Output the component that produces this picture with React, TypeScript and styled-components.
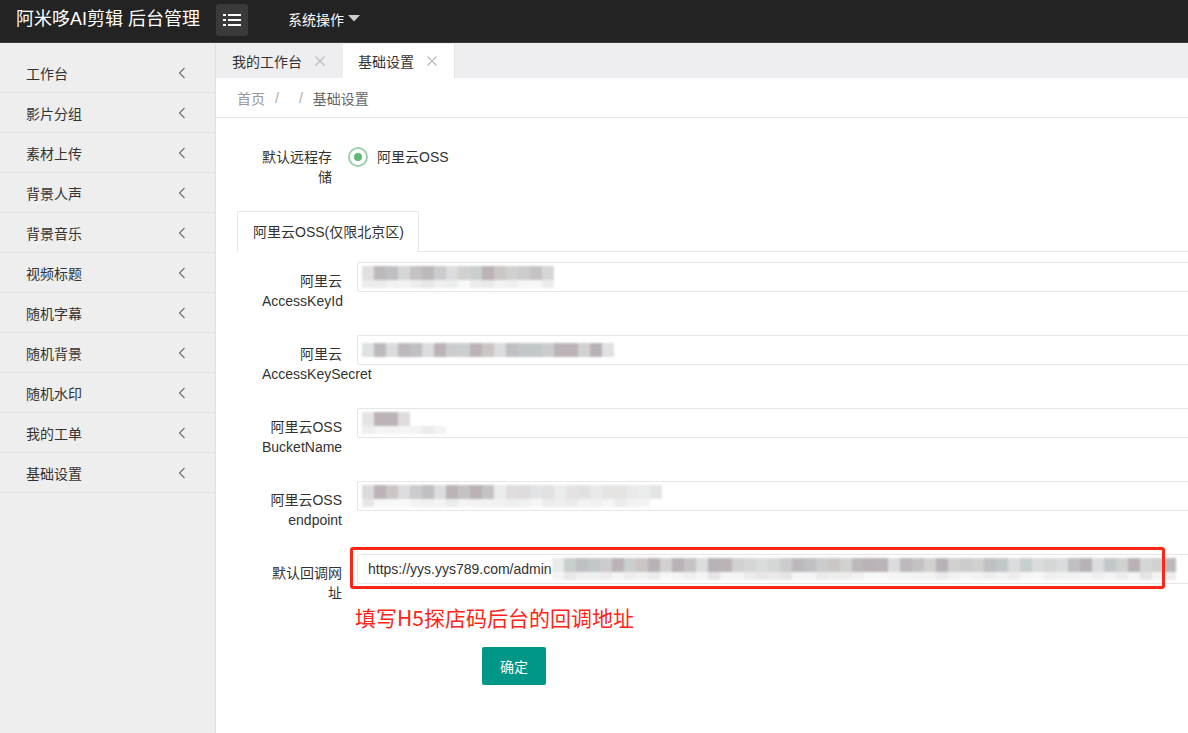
import styled, { createGlobalStyle } from 'styled-components';

const GlobalStyle = createGlobalStyle`
  html, body {
    margin: 0;
    padding: 0;
    overflow: hidden;
  }
  body {
    font-family: "Liberation Sans", "Noto Sans CJK SC", sans-serif;
    font-size: 14px;
    color: #333;
  }
`;

const Page = styled.div`
  display: flex;
  flex-direction: column;
  height: 100vh;
  width: 100vw;
`;

const Header = styled.div`
  height: 42px;
  flex-shrink: 0;
  background: #232323;
  border-bottom: 1px solid #3d3d3d;
  display: flex;
  align-items: center;
`;

const Logo = styled.div`
  width: 200px;
  padding-left: 16px;
  color: #fff;
  font-size: 18px;
  line-height: 24px;
  margin-top: -5px;
  white-space: nowrap;
`;

const MenuBtn = styled.div`
  width: 32px;
  height: 32px;
  margin-top: -2px;
  border-radius: 3px;
  background: #3a3a3a;
  display: flex;
  align-items: center;
  justify-content: center;
`;

const NavMenu = styled.div`
  margin-left: 40px;
  margin-top: -5px;
  color: #fff;
  display: flex;
  align-items: center;
  gap: 4px;
`;

const Body = styled.div`
  flex: 1;
  display: flex;
  min-height: 0;
`;

const Sidebar = styled.div`
  width: 215px;
  flex-shrink: 0;
  background: #eee;
  border-right: 1px solid #e0e0e0;
  padding-top: 10px;
`;

const NavItem = styled.div`
  height: 39px;
  border-bottom: 1px solid #e2e2e2;
  padding: 0 29px 0 26px;
  display: flex;
  align-items: center;
  justify-content: space-between;
  color: #333;
`;

const Main = styled.div`
  flex: 1;
  display: flex;
  flex-direction: column;
  overflow: hidden;
`;

const TabBar = styled.div`
  height: 35px;
  flex-shrink: 0;
  background: #eeeef0;
  display: flex;
  align-items: flex-end;
`;

const PageTab = styled.div<{ $active?: boolean }>`
  height: ${(p) => (p.$active ? '34px' : '35px')};
  display: flex;
  align-items: center;
  gap: 13px;
  padding: ${(p) => (p.$active ? '0 17px 0 15px' : '0 18px 0 16px')};
  background: ${(p) => (p.$active ? '#fff' : 'transparent')};
  border-right: ${(p) => (p.$active ? '1px solid #e2e2e2' : 'none')};
  color: #333;
`;

const Breadcrumb = styled.div`
  height: 39px;
  flex-shrink: 0;
  border-bottom: 1px solid #e6e6e6;
  padding-left: 21px;
  display: flex;
  align-items: center;
  color: #999;
`;

const Crumb = styled.span<{ $current?: boolean }>`
  color: ${(p) => (p.$current ? '#666' : '#999')};
`;

const Sep = styled.span`
  color: #aaa;
  margin: 0 10px;
`;

const Content = styled.div`
  padding: 20px 0 0 21px;
`;

const FormItem = styled.div`
  display: flex;
  margin-bottom: 15px;
`;

const Label = styled.div`
  width: 80px;
  flex-shrink: 0;
  padding: 9px 15px;
  line-height: 20px;
  text-align: right;
  white-space: nowrap;
  color: #333;
`;

const LabelLine = styled.div<{ $left?: boolean }>`
  text-align: ${(p) => (p.$left ? 'left' : 'right')};
`;

const RadioBlock = styled.div`
  align-self: flex-start;
  margin-top: 9px;
  height: 20px;
  line-height: 20px;
  display: flex;
  align-items: center;
  gap: 9px;
  margin-left: 1px;
`;

const RadioCircle = styled.span`
  width: 16px;
  height: 16px;
  border-radius: 50%;
  border: 2px solid #9dcfab;
  display: flex;
  align-items: center;
  justify-content: center;
  &::after {
    content: '';
    width: 8px;
    height: 8px;
    border-radius: 50%;
    background: #5fb878;
  }
`;

const TabBox = styled.div``;

const TabTitleRow = styled.div`
  display: flex;
  border-bottom: 1px solid #e6e6e6;
  height: 40px;
`;

const TabTitle = styled.div`
  line-height: 40px;
  padding: 0 14px 0 15px;
  border: 1px solid #e6e6e6;
  border-bottom: none;
  box-sizing: border-box;
  background: #fff;
  margin-bottom: -1px;
  height: 41px;
`;

const TabContent = styled.div`
  padding: 10px;
`;

const InputBlock = styled.div`
  position: relative;
  flex-shrink: 0;
`;

const Field = styled.div<{ $pad?: number }>`
  width: 900px;
  height: 30px;
  box-sizing: border-box;
  border: 1px solid #e6e6e6;
  border-radius: 2px;
  background: #fff;
  display: flex;
  align-items: center;
  padding-left: ${(p) => p.$pad ?? 4}px;
  color: #333;
  white-space: nowrap;
`;

const MosaicWrap = styled.div`
  display: flex;
  flex-direction: column;
  filter: blur(1px);
`;

const MosaicRow = styled.div`
  display: flex;
`;

const Cell = styled.span<{ $h: number }>`
  width: 12px;
  height: ${(p) => p.$h}px;
`;

const Annotation = styled.div`
  position: absolute;
  left: -7px;
  top: -7px;
  width: 809px;
  height: 36px;
  border: 3px solid #ff2418;
  border-radius: 3px;
  pointer-events: none;
`;

const Note = styled.div`
  position: absolute;
  left: -2px;
  top: 51px;
  font-family: "Noto Sans CJK SC", "Liberation Sans", sans-serif;
  font-size: 21px;
  line-height: 24px;
  color: #ff2418;
  white-space: nowrap;
`;

const ButtonRow = styled.div`
  padding: 10px 0 0 245px;
`;

const Button = styled.button`
  width: 64px;
  height: 38px;
  border: none;
  border-radius: 2px;
  background: #009688;
  color: #fff;
  font-family: inherit;
  font-size: 14px;
  padding: 0;
`;

const Chevron = () => (
  <svg width="8" height="12" viewBox="0 0 8 12">
    <polyline points="6.5,1 1.5,6 6.5,11" fill="none" stroke="#777" strokeWidth="1.2" />
  </svg>
);

const Close = () => (
  <svg width="10" height="10" viewBox="0 0 10 10">
    <path d="M0.5 0.5L9.5 9.5M9.5 0.5L0.5 9.5" stroke="#bbb" strokeWidth="1.2" />
  </svg>
);

const ListIcon = () => (
  <svg width="18" height="12" viewBox="0 0 18 12">
    {[1, 6, 11].map((y) => (
      <g key={y}>
        <rect x="0" y={y - 1} width="3" height="2" fill="#fff" />
        <rect x="5" y={y - 1} width="13" height="2" fill="#fff" />
      </g>
    ))}
  </svg>
);

const Caret = () => (
  <svg width="12" height="7" viewBox="0 0 12 7">
    <polygon points="0,0 12,0 6,6.5" fill="#ccc" />
  </svg>
);

const palette = ['#c9c9cb', '#bcbcc1', '#d3d5d4', '#b7afb4', '#c6cccb', '#c2bfc0', '#b9b4b8', '#cfcfcd', '#bfc4c6', '#c8c3c1', '#d8dadb', '#b4aeb3'];

const seeded = (seed: number) => {
  let s = seed;
  return () => {
    s = (s * 9301 + 49297) % 233280;
    return s / 233280;
  };
};

const lighten = (hex: string, amt: number) => {
  const n = parseInt(hex.slice(1), 16);
  const mix = (c: number) => Math.round(c + (255 - c) * amt);
  const r = mix((n >> 16) & 255);
  const g = mix((n >> 8) & 255);
  const b = mix(n & 255);
  return `rgb(${r},${g},${b})`;
};

const Mosaic = ({ cells, tail = 0, seed, second = 0 }: { cells: number; tail?: number; seed: number; second?: number }) => {
  const rnd = seeded(seed);
  const row1 = Array.from({ length: cells + tail }, (_, i) => {
    const c = palette[Math.floor(rnd() * palette.length)];
    return lighten(c, i >= cells ? 0.55 : i === 0 ? 0.5 : 0.05);
  });
  const row2 = Array.from({ length: second }, () => lighten(palette[Math.floor(rnd() * palette.length)], 0.65 + rnd() * 0.2));
  return (
    <MosaicWrap>
      <MosaicRow>
        {row1.map((c, i) => (
          <Cell key={i} $h={14} style={{ background: c }} />
        ))}
      </MosaicRow>
      {second > 0 && (
        <MosaicRow>
          {row2.map((c, i) => (
            <Cell key={i} $h={8} style={{ background: c }} />
          ))}
        </MosaicRow>
      )}
    </MosaicWrap>
  );
};

const menus = ['工作台', '影片分组', '素材上传', '背景人声', '背景音乐', '视频标题', '随机字幕', '随机背景', '随机水印', '我的工单', '基础设置'];

const ossFields: { lines: string[]; cells: number; tail?: number; second?: number; seed: number }[] = [
  { lines: ['阿里云', 'AccessKeyId'], cells: 16, second: 16, seed: 7 },
  { lines: ['阿里云', 'AccessKeySecret'], cells: 20, tail: 1, seed: 13 },
  { lines: ['阿里云OSS', 'BucketName'], cells: 3, tail: 1, second: 7, seed: 21 },
  { lines: ['阿里云OSS', 'endpoint'], cells: 11, tail: 14, second: 24, seed: 33 },
];

export default function App() {
  return (
    <>
      <GlobalStyle />
      <Page>
        <Header>
          <Logo>阿米哆AI剪辑 后台管理</Logo>
          <MenuBtn>
            <ListIcon />
          </MenuBtn>
          <NavMenu>
            系统操作
            <Caret />
          </NavMenu>
        </Header>
        <Body>
          <Sidebar>
            {menus.map((m) => (
              <NavItem key={m}>
                {m}
                <Chevron />
              </NavItem>
            ))}
          </Sidebar>
          <Main>
            <TabBar>
              <PageTab>
                我的工作台
                <Close />
              </PageTab>
              <PageTab $active>
                基础设置
                <Close />
              </PageTab>
            </TabBar>
            <Breadcrumb>
              <Crumb>首页</Crumb>
              <Sep>/</Sep>
              <Sep>/</Sep>
              <Crumb $current>基础设置</Crumb>
            </Breadcrumb>
            <Content>
              <FormItem>
                <Label>
                  <LabelLine>默认远程存</LabelLine>
                  <LabelLine>储</LabelLine>
                </Label>
                <RadioBlock>
                  <RadioCircle />
                  阿里云OSS
                </RadioBlock>
              </FormItem>
              <TabBox>
                <TabTitleRow>
                  <TabTitle>阿里云OSS(仅限北京区)</TabTitle>
                </TabTitleRow>
                <TabContent>
                  {ossFields.map((f) => (
                    <FormItem key={f.lines.join()}>
                      <Label>
                        <LabelLine>{f.lines[0]}</LabelLine>
                        <LabelLine $left={f.lines[1].length > 11}>{f.lines[1]}</LabelLine>
                      </Label>
                      <InputBlock>
                        <Field>
                          <Mosaic cells={f.cells} tail={f.tail} second={f.second} seed={f.seed} />
                        </Field>
                      </InputBlock>
                    </FormItem>
                  ))}
                  <FormItem>
                    <Label>
                      <LabelLine>默认回调网</LabelLine>
                      <LabelLine>址</LabelLine>
                    </Label>
                    <InputBlock>
                      <Field $pad={10}>
                        https://yys.yys789.com/admin
                        <Mosaic cells={52} second={52} seed={51} />
                      </Field>
                      <Annotation />
                      <Note>填写H5探店码后台的回调地址</Note>
                    </InputBlock>
                  </FormItem>
                </TabContent>
              </TabBox>
              <ButtonRow>
                <Button>确定</Button>
              </ButtonRow>
            </Content>
          </Main>
        </Body>
      </Page>
    </>
  );
}
